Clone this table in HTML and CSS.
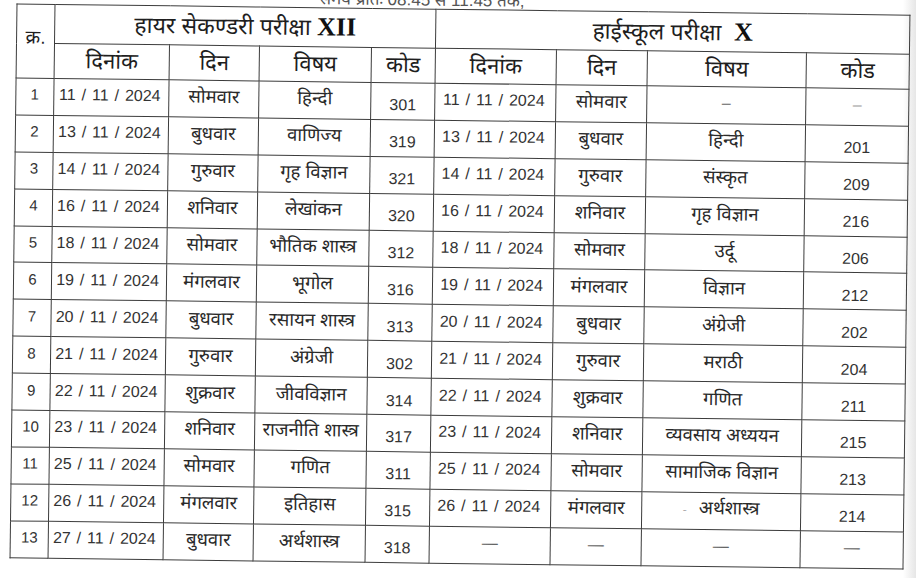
FILE: index.html
```html
<!DOCTYPE html>
<html lang="hi">
<head>
<meta charset="utf-8">
<title>परीक्षा समय सारणी</title>
<link rel="stylesheet" href="styles.css">
</head>
<body>
<div class="sheet">
  <div class="note">
    <span class="note-left">परीक्षा कार्यक्रम वर्ष</span>
    <span class="note-right">समय प्रातः 08:45 से 11:45 तक,</span>
  </div>
  <table class="grid">
    <colgroup>
      <col class="c-sn"><col class="c-date"><col class="c-day"><col class="c-sub"><col class="c-code">
      <col class="c-date2"><col class="c-day2"><col class="c-sub2"><col class="c-code2">
    </colgroup>
    <thead>
      <tr class="h1">
        <th rowspan="2" class="sn-head">क्र.</th>
        <th colspan="4" class="group">हायर सेकण्डरी परीक्षा <b class="roman">XII</b></th>
        <th colspan="4" class="group">हाईस्कूल परीक्षा&nbsp;&nbsp;<b class="roman">X</b></th>
      </tr>
      <tr class="h2">
        <th>दिनांक</th><th>दिन</th><th>विषय</th><th>कोड</th>
        <th>दिनांक</th><th>दिन</th><th>विषय</th><th>कोड</th>
      </tr>
    </thead>
    <tbody>
      <tr><td class="sn">1</td><td class="dt">11 / 11 / 2024</td><td>सोमवार</td><td>हिन्दी</td><td class="code">301</td><td class="dt">11 / 11 / 2024</td><td>सोमवार</td><td class="dash">–</td><td class="code dash">–</td></tr>
      <tr><td class="sn">2</td><td class="dt">13 / 11 / 2024</td><td>बुधवार</td><td>वाणिज्य</td><td class="code">319</td><td class="dt">13 / 11 / 2024</td><td>बुधवार</td><td>हिन्दी</td><td class="code">201</td></tr>
      <tr><td class="sn">3</td><td class="dt">14 / 11 / 2024</td><td>गुरुवार</td><td>गृह विज्ञान</td><td class="code">321</td><td class="dt">14 / 11 / 2024</td><td>गुरुवार</td><td>संस्कृत</td><td class="code">209</td></tr>
      <tr><td class="sn">4</td><td class="dt">16 / 11 / 2024</td><td>शनिवार</td><td>लेखांकन</td><td class="code">320</td><td class="dt">16 / 11 / 2024</td><td>शनिवार</td><td>गृह विज्ञान</td><td class="code">216</td></tr>
      <tr><td class="sn">5</td><td class="dt">18 / 11 / 2024</td><td>सोमवार</td><td>भौतिक शास्त्र</td><td class="code">312</td><td class="dt">18 / 11 / 2024</td><td>सोमवार</td><td>उर्दू</td><td class="code">206</td></tr>
      <tr><td class="sn">6</td><td class="dt">19 / 11 / 2024</td><td>मंगलवार</td><td>भूगोल</td><td class="code">316</td><td class="dt">19 / 11 / 2024</td><td>मंगलवार</td><td>विज्ञान</td><td class="code">212</td></tr>
      <tr><td class="sn">7</td><td class="dt">20 / 11 / 2024</td><td>बुधवार</td><td>रसायन शास्त्र</td><td class="code">313</td><td class="dt">20 / 11 / 2024</td><td>बुधवार</td><td>अंग्रेजी</td><td class="code">202</td></tr>
      <tr><td class="sn">8</td><td class="dt">21 / 11 / 2024</td><td>गुरुवार</td><td>अंग्रेजी</td><td class="code">302</td><td class="dt">21 / 11 / 2024</td><td>गुरुवार</td><td>मराठी</td><td class="code">204</td></tr>
      <tr><td class="sn">9</td><td class="dt">22 / 11 / 2024</td><td>शुक्रवार</td><td>जीवविज्ञान</td><td class="code">314</td><td class="dt">22 / 11 / 2024</td><td>शुक्रवार</td><td>गणित</td><td class="code">211</td></tr>
      <tr><td class="sn">10</td><td class="dt">23 / 11 / 2024</td><td>शनिवार</td><td>राजनीति शास्त्र</td><td class="code">317</td><td class="dt">23 / 11 / 2024</td><td>शनिवार</td><td>व्यवसाय अध्ययन</td><td class="code">215</td></tr>
      <tr><td class="sn">11</td><td class="dt">25 / 11 / 2024</td><td>सोमवार</td><td>गणित</td><td class="code">311</td><td class="dt">25 / 11 / 2024</td><td>सोमवार</td><td>सामाजिक विज्ञान</td><td class="code">213</td></tr>
      <tr><td class="sn">12</td><td class="dt">26 / 11 / 2024</td><td>मंगलवार</td><td>इतिहास</td><td class="code">315</td><td class="dt">26 / 11 / 2024</td><td>मंगलवार</td><td><span class="speck">-</span>अर्थशास्त्र</td><td class="code">214</td></tr>
      <tr><td class="sn">13</td><td class="dt">27 / 11 / 2024</td><td>बुधवार</td><td>अर्थशास्त्र</td><td class="code">318</td><td class="dash">—</td><td class="dash">—</td><td class="dash">—</td><td class="dash">—</td></tr>
    </tbody>
  </table>
</div>
</body>
</html>
```
FILE: styles.css
```css
html, body {
  margin: 0;
  padding: 0;
}
body {
  width: 916px;
  height: 578px;
  overflow: hidden;
  background: linear-gradient(to right, #ffffff 0, #ffffff 903px, #e6e6e6 916px);
  font-family: "Liberation Sans", "Noto Sans Devanagari", "Lohit Devanagari", "FreeSans", sans-serif;
  color: #222;
}
.sheet {
  width: 893px;
  margin: -6px 0 0 13px;
  transform: rotate(0.72deg);
  transform-origin: 446px 291px;
}
.note {
  height: 15px;
  display: flex;
  justify-content: space-between;
  font-size: 17px;
  line-height: 14px;
  color: #555;
  overflow: hidden;
}
.note-left {
  margin-left: 110px;
  font-size: 15px;
  color: #888;
  position: relative;
  top: -7px;
}
.note-right {
  margin-right: 385px;
  position: relative;
  top: 0;
}
.grid {
  width: 893px;
  table-layout: fixed;
  border-collapse: collapse;
  border: 1.6px solid #3a3a3a;
}
.c-sn { width: 38px; }
.c-date { width: 115px; }
.c-day { width: 90px; }
.c-sub { width: 112px; }
.c-code { width: 64px; }
.c-date2 { width: 121px; }
.c-day2 { width: 91px; }
.c-sub2 { width: 159px; }
.c-code2 { width: 103px; }

.grid th, .grid td {
  box-sizing: border-box;
  border: 1.4px solid #3c3c3c;
  padding: 0;
  text-align: center;
  vertical-align: middle;
  white-space: nowrap;
  line-height: 20px;
}
.grid th {
  font-weight: normal;
  color: #1e1e1e;
}
.h1 { height: 39px; }
.h2 { height: 35px; }
.h2 th { font-size: 22px; line-height: 24px; }
.group {
  font-size: 23px;
  line-height: 26px;
  padding-bottom: 2px;
}
.roman {
  font-family: "Liberation Serif", "Times New Roman", serif;
  font-size: 26px;
  font-weight: bold;
  color: #111;
}
.sn-head {
  font-size: 19px;
  padding-bottom: 8px !important;
}
.grid tbody tr { height: 36.9px; }
.grid tbody td {
  font-size: 18.5px;
  color: #2a2a2a;
  padding-bottom: 3px;
}
.grid tbody td.sn {
  font-size: 15px;
  color: #333;
}
.grid tbody td.dt {
  font-family: "Liberation Sans", Arial, sans-serif;
  font-size: 16px;
  word-spacing: 1.5px;
  color: #333;
  padding-right: 3px;
}
.grid tbody td.code {
  font-family: "Liberation Sans", Arial, sans-serif;
  font-size: 16px;
  color: #333;
  padding-top: 9px;
  padding-bottom: 0;
}
.grid tbody td.dash {
  color: #666;
  font-size: 16px;
}
.grid tbody td.code.dash {
  padding-top: 0;
  padding-bottom: 3px;
  color: #999;
}
.speck {
  color: #aaa;
  font-size: 12px;
  margin-right: 12px;
}
```
